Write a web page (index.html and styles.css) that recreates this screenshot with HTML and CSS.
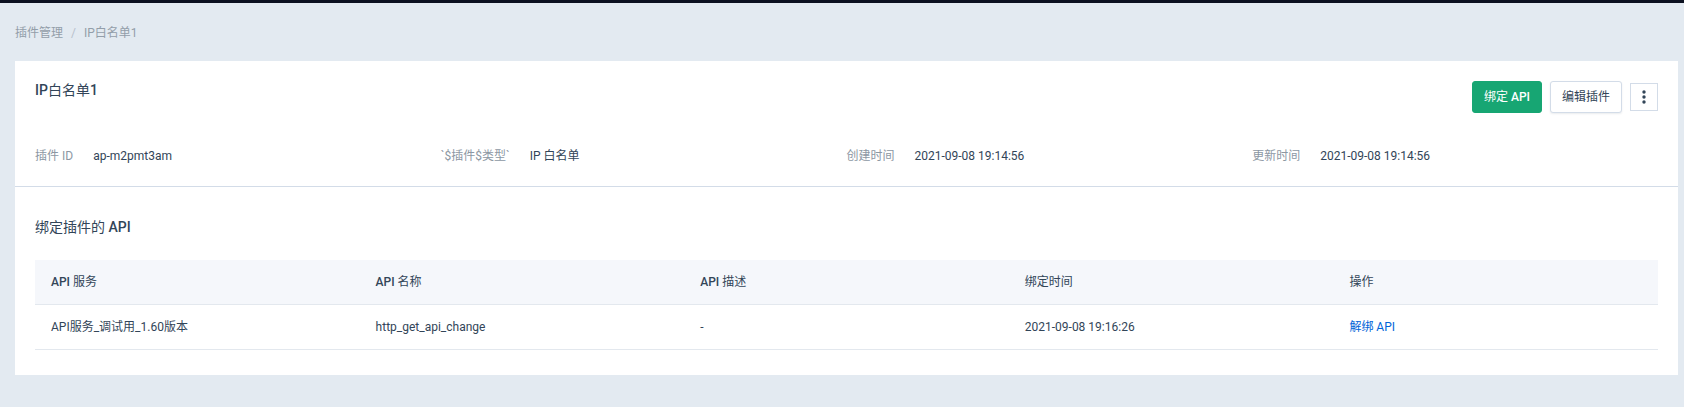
FILE: index.html
```html
<!DOCTYPE html>
<html lang="zh-CN">
<head>
<meta charset="utf-8">
<title>IP白名单1</title>
<link rel="stylesheet" href="styles.css">
</head>
<body>
<nav class="breadcrumb" aria-label="breadcrumb">
  <a href="#">插件管理</a>
  <span class="breadcrumb-separator">/</span>
  <span>IP白名单1</span>
</nav>
<main class="card">
  <section class="summary">
    <header class="summary-header">
      <h1 class="title"><span class="latin">IP</span>白名单<span class="latin">1</span></h1>
      <div class="actions">
        <button type="button" class="button button-primary">绑定 <span class="latin">API</span></button>
        <button type="button" class="button">编辑插件</button>
        <button type="button" class="button-more" aria-label="更多">
          <svg width="4" height="14" viewBox="0 0 4 14" fill="currentColor"><circle cx="2" cy="2" r="1.7"/><circle cx="2" cy="7" r="1.7"/><circle cx="2" cy="12" r="1.7"/></svg>
        </button>
      </div>
    </header>
    <dl class="info">
      <div class="info-item"><dt>插件 ID</dt><dd>ap-m2pmt3am</dd></div>
      <div class="info-item"><dt>`$插件$类型`</dt><dd>IP 白名单</dd></div>
      <div class="info-item"><dt>创建时间</dt><dd>2021-09-08 19:14:56</dd></div>
      <div class="info-item"><dt>更新时间</dt><dd>2021-09-08 19:14:56</dd></div>
    </dl>
  </section>
  <section class="bindings">
    <h2 class="title">绑定插件的 <span class="latin">API</span></h2>
    <table class="table">
      <thead>
        <tr>
          <th><span class="latin">API</span> 服务</th>
          <th><span class="latin">API</span> 名称</th>
          <th><span class="latin">API</span> 描述</th>
          <th>绑定时间</th>
          <th>操作</th>
        </tr>
      </thead>
      <tbody>
        <tr>
          <td>API服务_调试用_1.60版本</td>
          <td>http_get_api_change</td>
          <td>-</td>
          <td>2021-09-08 19:16:26</td>
          <td><a class="link" href="#">解绑 API</a></td>
        </tr>
      </tbody>
    </table>
  </section>
</main>
</body>
</html>
```
FILE: styles.css
```css
* {
  box-sizing: border-box;
}

body {
  margin: 0;
  min-height: 100vh;
  padding: 0 6px 32px 15px;
  border-top: 3px solid #0b1120;
  background: #e3eaf1;
  color: #324558;
  font: 12px/20px Roboto, "Noto Sans CJK SC", sans-serif;
}

.breadcrumb {
  display: flex;
  gap: 8px;
  padding: 20px 0 18px;
  color: #939ea9;
}

.breadcrumb a {
  color: inherit;
  text-decoration: none;
}

.breadcrumb-separator {
  color: #b7c1cc;
}

.card {
  background: #fff;
}

.summary {
  padding: 20px;
  border-bottom: 1px solid #d3dce8;
}

.summary-header {
  display: flex;
  justify-content: space-between;
  align-items: flex-start;
}

.title {
  margin: 0;
  font-size: 14px;
  font-weight: 400;
  line-height: 18px;
}

/* Medium weight applies to Latin text only */
.latin {
  font-weight: 500;
}

.actions {
  display: flex;
  align-items: center;
  gap: 8px;
}

.button {
  height: 32px;
  padding: 0 11px;
  border: 1px solid #d3dce8;
  border-radius: 3px;
  background: #fff;
  box-shadow: 0 1px 2px rgba(50, 69, 88, 0.1);
  color: #324558;
  font: inherit;
}

.button-primary {
  border-color: #17a673;
  background: #17a673;
  box-shadow: none;
  color: #fff;
}

.button-more {
  display: flex;
  align-items: center;
  justify-content: center;
  width: 28px;
  height: 28px;
  padding: 0;
  border: 1px solid #d3dce8;
  background: #fff;
  color: #324558;
}

.info {
  display: grid;
  grid-template-columns: repeat(4, 1fr);
  margin: 33px 0 0;
}

.info-item {
  display: flex;
  gap: 20px;
}

.info dt {
  color: #8c97a3;
}

.info dd {
  margin: 0;
}

.bindings {
  padding: 31px 20px 25px;
}

.table {
  width: 100%;
  margin-top: 24px;
  border-collapse: separate;
  border-spacing: 0;
  table-layout: fixed;
}

.table th,
.table td {
  padding: 12px 16px;
  border-bottom: 1px solid #e3e8ee;
  text-align: left;
}

.table th {
  background: #f5f7fb;
  font-weight: 400;
}

.link {
  color: #0064d8;
  text-decoration: none;
}
```
